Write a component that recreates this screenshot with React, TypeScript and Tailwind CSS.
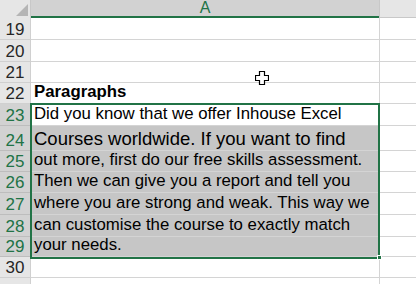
import React from "react";

type Row = { n: number; h: number; text?: string; bold?: boolean; big?: boolean; sel?: boolean; active?: boolean };

const rows: Row[] = [
  { n: 19, h: 22 },
  { n: 20, h: 22 },
  { n: 21, h: 21 },
  { n: 22, h: 21, text: "Paragraphs", bold: true },
  { n: 23, h: 22, text: "Did you know that we offer Inhouse Excel", sel: true, active: true },
  { n: 24, h: 25, text: "Courses worldwide. If you want to find", big: true, sel: true },
  { n: 25, h: 21, text: "out more, first do our free skills assessment.", sel: true },
  { n: 26, h: 21, text: "Then we can give you a report and tell you", sel: true },
  { n: 27, h: 22, text: "where you are strong and weak. This way we", sel: true },
  { n: 28, h: 22, text: "can customise the course to exactly match", sel: true },
  { n: 29, h: 20, text: "your needs.", sel: true },
  { n: 30, h: 21 },
];

function Cursor() {
  return (
    <svg width="14" height="14" viewBox="0 0 14 14" className="absolute left-[255px] top-[71px]">
      <path
        d="M4.5 0.5h5v4h4v5h-4v4h-5v-4h-4v-5h4z"
        fill="#fff"
        stroke="#000"
        strokeWidth="1.2"
      />
    </svg>
  );
}

export default function App() {
  return (
    <div className="relative h-[284px] w-[416px] overflow-hidden bg-white font-['Liberation_Sans',Arial,sans-serif] text-black">
      {/* column headers */}
      <div className="flex h-[18px]">
        <div className="relative w-[31px] border-r border-[#c8c8c8] bg-[#e6e6e6]">
          <svg width="12" height="12" className="absolute bottom-[2px] right-[2px]">
            <polygon points="12,0 12,12 0,12" fill="#b5b5b5" />
          </svg>
        </div>
        <div className="flex w-[348px] items-center justify-center border-b-2 border-[#217346] bg-[#d2d2d2] text-[16px] leading-none text-[#217346]">
          A
        </div>
        <div className="flex-1 border-b border-l border-[#c8c8c8] bg-[#e6e6e6]" />
      </div>

      {rows.map((r) => (
        <div key={r.n} className="flex" style={{ height: r.h }}>
          <div
            className={`flex w-[31px] items-end justify-center border-r border-b pb-[1px] text-[17px] leading-none ${
              r.sel
                ? "border-[#bdbdbd] bg-[#d2d2d2] text-[#217346]"
                : "border-[#d0d0d0] bg-[#e6e6e6] text-[#262626]"
            }`}
          >
            {r.n}
          </div>
          <div
            className={`flex w-[348px] items-end border-b border-[#d4d4d4] pl-[3px] leading-none whitespace-nowrap ${
              r.sel && !r.active ? "bg-[#c6c6c6]" : "bg-white"
            } ${r.big ? "pb-[2px] text-[18.5px]" : "pb-[2px] text-[16.8px]"} ${r.bold ? "font-bold" : ""}`}
          >
            {r.text}
          </div>
          <div className="flex-1 border-b border-l border-[#d4d4d4]" />
        </div>
      ))}
      <div className="flex h-[10px]">
        <div className="w-[31px] border-r border-[#d0d0d0] bg-[#e6e6e6]" />
        <div className="w-[348px]" />
        <div className="flex-1 border-l border-[#d4d4d4]" />
      </div>

      {/* selection outline */}
      <div className="absolute left-[30px] top-[103px] h-[156px] w-[350px] border-2 border-[#217346]" />
      <div className="absolute left-[377px] top-[255px] h-[5px] w-[5px] border border-white bg-[#217346]" />

      <Cursor />
    </div>
  );
}
